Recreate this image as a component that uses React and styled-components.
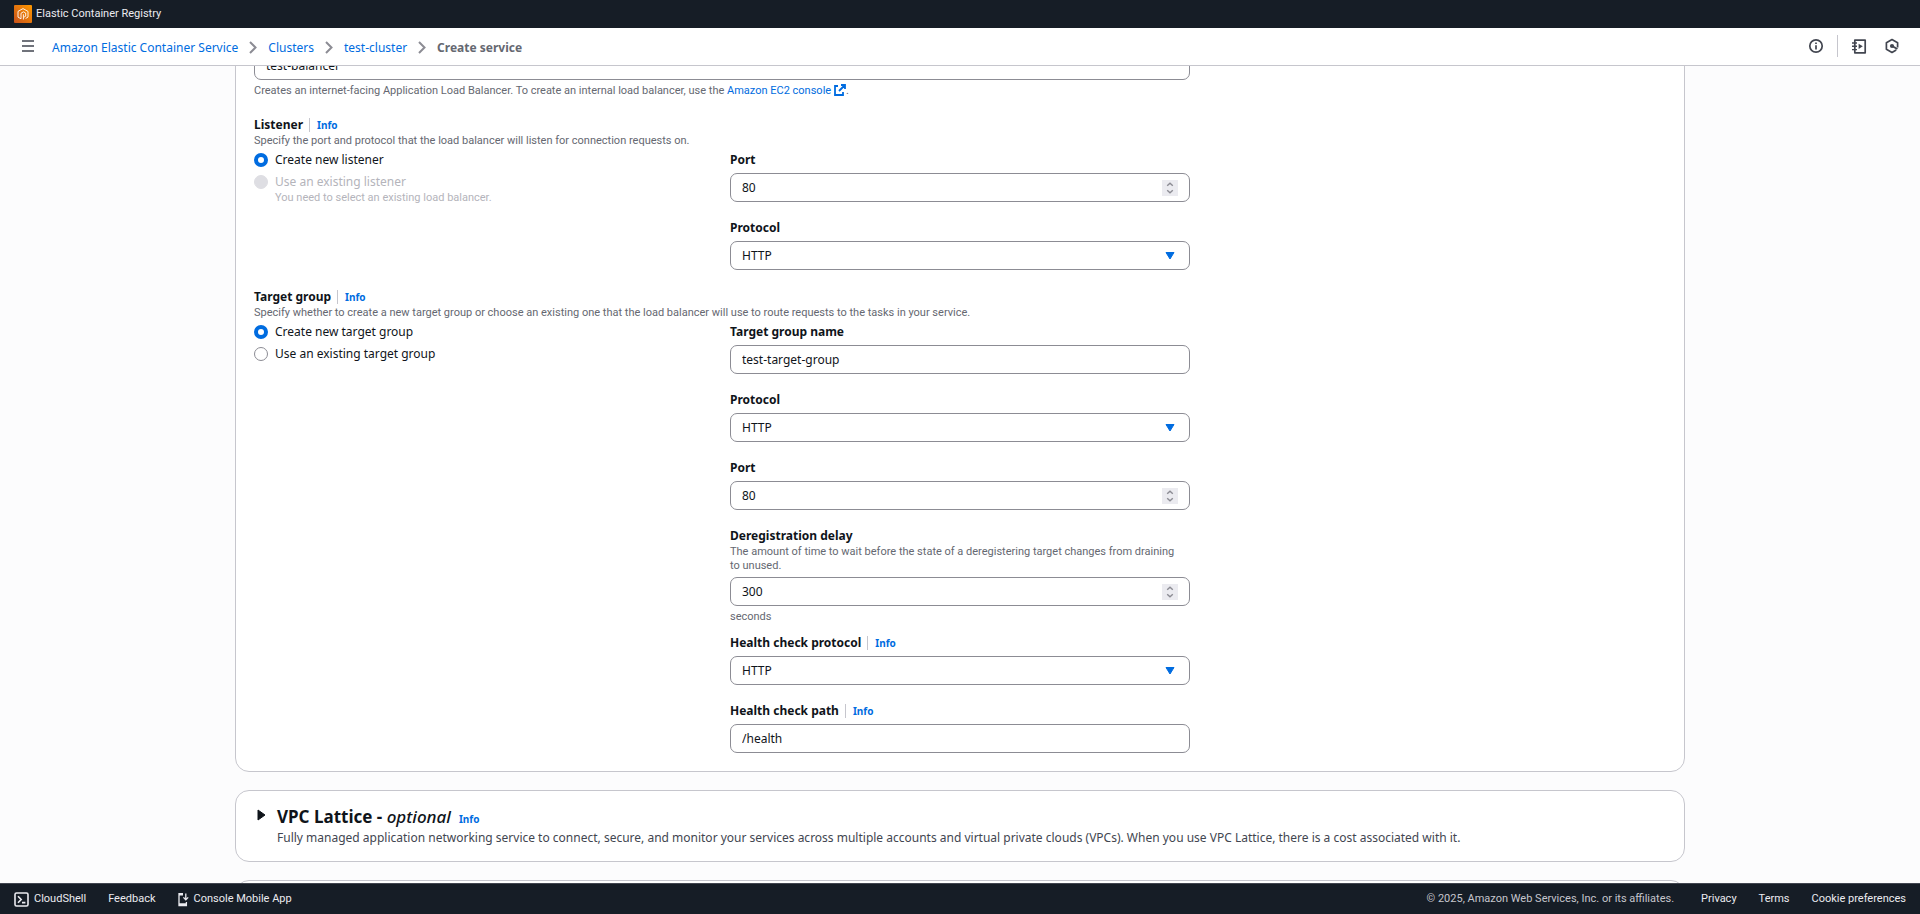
import React from 'react'
import styled, { createGlobalStyle, css } from 'styled-components'

const FooterLinks = ["Privacy", "Terms", "Cookie preferences"]

const Crumbs = ["Amazon Elastic Container Service", "Clusters", "test-cluster"]

const TargetFields = [
    { id: "tg-name", label: "Target group name", kind: "text", value: "test-target-group" },
    { id: "tg-protocol", label: "Protocol", kind: "select", value: "HTTP" },
    { id: "tg-port", label: "Port", kind: "number", value: "80" },
    {
        id: "tg-delay",
        label: "Deregistration delay",
        desc: "The amount of time to wait before the state of a deregistering target changes from draining to unused.",
        kind: "number",
        value: "300",
        hint: "seconds",
    },
    { id: "hc-protocol", label: "Health check protocol", info: true, kind: "select", value: "HTTP" },
    { id: "hc-path", label: "Health check path", info: true, kind: "text", value: "/health" },
]

const Chevron = () => (
    <svg width="8" height="13" viewBox="0 0 8 13" fill="none" stroke="#8c8c94" strokeWidth="2">
        <path d="M1 1l5.5 5.5L1 12" />
    </svg>
)

const RegistryLogo = () => (
    <svg width="18" height="18" viewBox="0 0 18 18" fill="none">
        <defs>
            <linearGradient id="registry" x1="0" y1="1" x2="1" y2="0">
                <stop offset="0" stopColor="#c8511b" />
                <stop offset="1" stopColor="#ff9900" />
            </linearGradient>
        </defs>
        <rect width="18" height="18" rx="1" fill="url(#registry)" />
        <path d="M7 13.8l-3-1.7V6.4l5-2.8 5 2.8v5.7l-2.4 1.4M7 13.8V8.3l2.4-1.5 2.3 1.2v3.2l-2.3 1.3V9.3M9.4 12.5v2" stroke="#fff" strokeWidth=".9" />
    </svg>
)

const MenuIcon = () => (
    <svg width="14" height="12" viewBox="0 0 14 12" stroke="#424650" strokeWidth="1.7">
        <path d="M1 1h12M1 6h12M1 11h12" />
    </svg>
)

const InfoIcon = () => (
    <svg width="16" height="16" viewBox="0 0 16 16" fill="none" stroke="#424650" strokeWidth="1.7">
        <circle cx="8" cy="8" r="6.2" />
        <path d="M8 7.2v4.2M8 4.4v1.6" />
    </svg>
)

const NotebookIcon = () => (
    <svg width="16" height="16" viewBox="0 0 16 16" fill="none" stroke="#424650" strokeWidth="1.7">
        <path d="M3.8 2.2h10.4v12.6H3.8z" strokeLinejoin="round" />
        <path d="M1 5h5M1 8.3h5M1 11.6h5" strokeWidth="1.4" />
        <path d="M7.6 5.7v5.2l4.2-2.6z" fill="#424650" stroke="none" />
    </svg>
)

const HexIcon = () => (
    <svg width="16" height="16" viewBox="0 0 16 16" fill="none" stroke="#424650" strokeWidth="1.7">
        <path d="M13.6 9.6V4.7L8 1.6 2.4 4.7v6.6L8 14.4l4.2-2.3" strokeLinejoin="round" />
        <circle cx="8" cy="8" r="2.1" fill="#424650" stroke="none" />
        <path d="M8 8l5.4 3" strokeWidth="2" />
    </svg>
)

const ExternalIcon = () => (
    <svg width="12" height="12" viewBox="0 0 12 12" fill="none" stroke="#006ce0" strokeWidth="1.8">
        <path d="M7 1h4v4M11 1L5 7M4 2H1v9h8V8" />
    </svg>
)

const ShellIcon = () => (
    <svg width="15" height="15" viewBox="0 0 15 15" fill="none" stroke="#ebebf0" strokeWidth="1.6">
        <rect x="1" y="1" width="13" height="13" rx="1.5" />
        <path d="M4 4.2l3.2 3.3L4 10.8M8 10.6h3.4" />
    </svg>
)

const PhoneIcon = () => (
    <svg width="11" height="15" viewBox="0 0 11 15" fill="none" stroke="#ebebf0" strokeWidth="1.3">
        <path d="M5 1.6H1v12h7.4V10" />
        <path d="M1 12.4h7.4M1 2.2h4" strokeWidth="2.4" />
        <path d="M7.8 1.4v6.2M5.4 5.4l2.4 2.4 2.4-2.4" />
    </svg>
)

const Stepper = () => (
    <svg width="16" height="16" viewBox="0 0 16 16" fill="none" stroke="#8c8c94" strokeWidth="1.4">
        <path d="M0 0h16v16H0z" fill="#ebebf0" stroke="none" />
        <path d="M5.2 5.8L8 3.2l2.8 2.6M5.2 10.2L8 12.8l2.8-2.6" />
    </svg>
)

const Caret = () => (
    <svg width="10" height="8" viewBox="0 0 10 8">
        <path d="M1 .5h8L5 7z" fill="#006ce0" stroke="#006ce0" strokeLinejoin="round" />
    </svg>
)

const Field = ({ id, label, info, desc, kind, value, hint }) => (
    <FieldBox $hinted={Boolean(hint)}>
        <LabelRow>
            <Label htmlFor={id}>{label}</Label>
            {info && <InfoLink href="#" $divided>Info</InfoLink>}
        </LabelRow>
        {desc && <Note>{desc}</Note>}
        <Control>
            {kind === "select"
                ? <Select id={id} defaultValue={value}><option>HTTP</option><option>HTTPS</option></Select>
                : <Input id={id} type={kind} defaultValue={value} />}
            {kind === "select" && <Adornment $pad={15}><Caret /></Adornment>}
            {kind === "number" && <Adornment $pad={12}><Stepper /></Adornment>}
        </Control>
        {hint && <Note>{hint}</Note>}
    </FieldBox>
)

const Choice = ({ name, label, note, ...rest }) => (
    <ChoiceLabel $off={rest.disabled}>
        <Radio type="radio" name={name} {...rest} />
        <span>
            {label}
            {note && <ChoiceNote>{note}</ChoiceNote>}
        </span>
    </ChoiceLabel>
)

const App = () => {
    return (
        <Page>
            <GlobalStyle />
            <Header>
                <TopBar>
                    <RegistryLogo />
                    <TopLink href="#">Elastic Container Registry</TopLink>
                </TopBar>
                <NavBar>
                    <IconButton aria-label="Open navigation"><MenuIcon /></IconButton>
                    <Breadcrumbs aria-label="Breadcrumbs">
                        {Crumbs.map((item) => (
                            <React.Fragment key={item}>
                                <Link href="#">{item}</Link>
                                <Chevron />
                            </React.Fragment>
                        ))}
                        <Current>Create service</Current>
                    </Breadcrumbs>
                    <Tools>
                        <IconButton aria-label="Info"><InfoIcon /></IconButton>
                        <Divider />
                        <IconButton aria-label="Tutorials"><NotebookIcon /></IconButton>
                        <IconButton aria-label="Assistant"><HexIcon /></IconButton>
                    </Tools>
                </NavBar>
            </Header>

            <Main>
                <Card>
                    <Columns>
                        <Wide>
                            <Input aria-label="Load balancer name" defaultValue="test-balancer" />
                            <Note>
                                Creates an internet-facing Application Load Balancer. To create an internal load balancer, use the{" "}
                                <Link href="#">Amazon EC2 console <ExternalIcon /></Link>.
                            </Note>
                        </Wide>
                    </Columns>

                    <Section>
                        <LabelRow>
                            <Label as="h3">Listener</Label>
                            <InfoLink href="#" $divided>Info</InfoLink>
                        </LabelRow>
                        <Note>Specify the port and protocol that the load balancer will listen for connection requests on.</Note>
                        <Columns $spaced>
                            <Choices>
                                <Choice name="listener" label="Create new listener" defaultChecked />
                                <Choice name="listener" label="Use an existing listener" note="You need to select an existing load balancer." disabled />
                            </Choices>
                            <Fields>
                                <Field id="port" label="Port" kind="number" value="80" />
                                <Field id="protocol" label="Protocol" kind="select" value="HTTP" />
                            </Fields>
                        </Columns>
                    </Section>

                    <Section>
                        <LabelRow>
                            <Label as="h3">Target group</Label>
                            <InfoLink href="#" $divided>Info</InfoLink>
                        </LabelRow>
                        <Note>Specify whether to create a new target group or choose an existing one that the load balancer will use to route requests to the tasks in your service.</Note>
                        <Columns $spaced>
                            <Choices>
                                <Choice name="target" label="Create new target group" defaultChecked />
                                <Choice name="target" label="Use an existing target group" />
                            </Choices>
                            <Fields>
                                {TargetFields.map((item) => <Field key={item.id} {...item} />)}
                            </Fields>
                        </Columns>
                    </Section>
                </Card>

                <Card $compact>
                    <Expander>
                        <ExpandButton aria-label="Expand VPC Lattice">
                            <svg width="9" height="12" viewBox="0 0 9 12"><path d="M1 1v10l7-5z" fill="#0f141a" stroke="#0f141a" strokeLinejoin="round" /></svg>
                        </ExpandButton>
                        <div>
                            <TitleRow>
                                <Title>VPC Lattice - <i>optional</i></Title>
                                <InfoLink href="#">Info</InfoLink>
                            </TitleRow>
                            <Summary>
                                Fully managed application networking service to connect, secure, and monitor your services across multiple accounts and virtual private clouds (VPCs). When you use VPC Lattice, there is a cost associated with it.
                            </Summary>
                        </div>
                    </Expander>
                </Card>

                <Card />
            </Main>

            <Footer>
                <FooterLink href="#"><ShellIcon />CloudShell</FooterLink>
                <FooterLink href="#">Feedback</FooterLink>
                <FooterLink href="#"><PhoneIcon />Console Mobile App</FooterLink>
                <Copyright>© 2025, Amazon Web Services, Inc. or its affiliates.</Copyright>
                {FooterLinks.map((item) => <FooterLink key={item} href="#">{item}</FooterLink>)}
            </Footer>
        </Page>
    )
}

export default App

const GlobalStyle = createGlobalStyle`
    * {
        box-sizing: border-box;
    }
    body {
        margin: 0;
        background: #fcfcfd;
        color: #0f141a;
        font: 12px/18px "Noto Sans", sans-serif;
    }
    h2, h3, p {
        margin: 0;
    }
    input, select, button {
        font: inherit;
        color: inherit;
    }
    svg {
        flex: none;
    }
`

const smallText = css`
    font: 11px/14px Roboto, "Noto Sans", sans-serif;
`

const Page = styled.div`
    height: 100vh;
    display: flex;
    flex-direction: column;
    overflow: hidden;
`

const Header = styled.header`
    flex: none;
    position: relative;
    z-index: 1;
`

const TopBar = styled.div`
    display: flex;
    align-items: center;
    gap: 4px;
    height: 28px;
    padding: 0 14px;
    background: #161d26;
`

const TopLink = styled.a`
    ${smallText}
    color: #ebebf0;
    text-decoration: none;
`

const NavBar = styled.div`
    display: flex;
    align-items: center;
    height: 38px;
    padding: 0 20px 2px 21px;
    background: #fff;
    border-bottom: 1px solid #c6c6cd;
`

const IconButton = styled.button`
    display: flex;
    padding: 0;
    border: 0;
    background: none;
`

const Breadcrumbs = styled.nav`
    display: flex;
    align-items: center;
    gap: 11px;
    padding: 4px 0 0 17px;
`

const Link = styled.a`
    color: #006ce0;
    text-decoration: none;

    svg {
        vertical-align: -2px;
    }
`

const Current = styled.span`
    color: #656871;
    font-weight: 700;
`

const Tools = styled.div`
    display: flex;
    align-items: center;
    gap: 17px;
    margin-left: auto;
`

const Divider = styled.span`
    width: 1px;
    height: 22px;
    margin: 0 -4px;
    background: #c6c6cd;
`

/* scrolled so that the first field is half under the header */
const Main = styled.main`
    flex: 1;
    min-height: 0;
    display: flex;
    flex-direction: column;
    gap: 18px;
    width: 100%;
    max-width: 1450px;
    margin: -34px auto 0;
`

const Card = styled.section`
    flex: none;
    padding: ${({ $compact }) => ($compact ? "14px 18px" : "18px")};
    background: #fff;
    border: 1px solid #c6c6cd;
    border-radius: 14px;
`

const Columns = styled.div`
    display: grid;
    grid-template-columns: repeat(3, 1fr);
    gap: 16px;
    margin-top: ${({ $spaced }) => ($spaced ? "3px" : "0")};
`

const Wide = styled.div`
    grid-column: span 2;
    display: grid;
    gap: 4px;
`

const Section = styled.div`
    margin-top: 18px;
`

const LabelRow = styled.div`
    display: flex;
    align-items: center;
    height: 18px;
`

const Label = styled.label`
    font-size: 12px;
    font-weight: 700;
`

const InfoLink = styled.a`
    color: #006ce0;
    font-size: 10px;
    line-height: 14px;
    font-weight: 700;
    text-decoration: none;
    ${({ $divided }) => $divided && css`
        margin-left: 6px;
        padding-left: 7px;
        border-left: 1px solid #c6c6cd;
    `}
`

const Note = styled.p`
    ${smallText}
    padding-right: 6px;
    color: #656871;
`

const Choices = styled.div`
    display: flex;
    flex-direction: column;
    gap: 4px;
`

const ChoiceLabel = styled.label`
    display: flex;
    gap: 7px;
    color: ${({ $off }) => ($off ? "#b4b4bb" : "#0f141a")};
`

const ChoiceNote = styled.small`
    ${smallText}
    display: block;
`

const Radio = styled.input`
    appearance: none;
    flex: none;
    width: 14px;
    height: 14px;
    margin: 2px 0;
    background: #fff;
    border: 1px solid #8c8c94;
    border-radius: 50%;

    &:checked {
        border: 4px solid #006ce0;
    }

    &:disabled {
        background: #dedee3;
        border-color: #dedee3;
    }
`

const Fields = styled.div`
    display: flex;
    flex-direction: column;
    gap: 17px;
`

const FieldBox = styled.div`
    margin-bottom: ${({ $hinted }) => ($hinted ? "-7px" : "0")};
`

const Control = styled.div`
    position: relative;
    margin: 4px 0 0;

    & + p {
        margin-top: 4px;
    }
`

const controlStyle = css`
    appearance: none;
    display: block;
    width: 100%;
    height: 29px;
    padding: 0 11px;
    background: #fff;
    border: 1px solid #8c8c94;
    border-radius: 7px;
`

const Input = styled.input`
    ${controlStyle}

    &::-webkit-inner-spin-button {
        appearance: none;
    }
`

const Select = styled.select`
    ${controlStyle}
`

const Adornment = styled.span`
    position: absolute;
    inset: 0 ${({ $pad }) => $pad}px 0 auto;
    display: flex;
    align-items: center;
    pointer-events: none;
`

const Expander = styled.div`
    display: flex;
    gap: 11px;
`

const ExpandButton = styled(IconButton)`
    align-self: flex-start;
    padding: 4px 0 0 3px;
`

const TitleRow = styled.div`
    display: flex;
    align-items: baseline;
    gap: 8px;
`

const Title = styled.h2`
    font-size: 17px;
    line-height: 24px;
    font-weight: 700;

    i {
        font-weight: 500;
    }
`

const Summary = styled.p`
    color: #424650;
`

const Footer = styled.footer`
    ${smallText}
    flex: none;
    position: relative;
    display: flex;
    align-items: center;
    gap: 22px;
    height: 31px;
    padding: 0 14px;
    background: #161d26;
    border-top: 1px solid #424650;
`

const FooterLink = styled.a`
    display: flex;
    align-items: center;
    gap: 5px;
    color: #ebebf0;
    text-decoration: none;
`

const Copyright = styled.span`
    margin: 0 5px 0 auto;
    color: #c6c6cd;
`
